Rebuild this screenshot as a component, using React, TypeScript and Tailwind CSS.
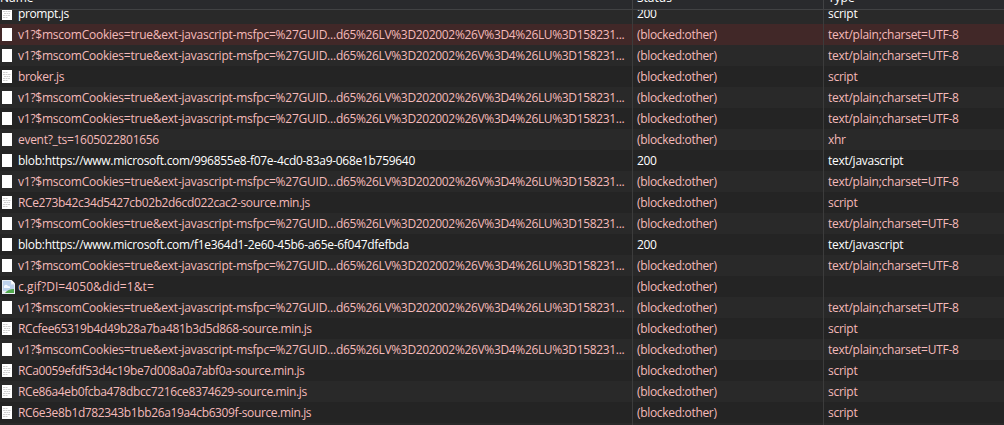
import clsx from 'clsx'

type Icon = 'blank' | 'script' | 'image'

interface NetworkRequest {
  name: string
  // second half of a name that is shortened in the middle
  nameEnd?: string
  status: string
  type: string
  icon: Icon
  // letter spacing of the name cell
  tracking: string
}

const BLOCKED = '(blocked:other)'

const telemetry: NetworkRequest = {
  name: 'v1?$mscomCookies=true&ext-javascript-msfpc=%27GUID...',
  nameEnd: 'd65%26LV%3D202002%26V%3D4%26LU%3D158231...',
  status: BLOCKED,
  type: 'text/plain;charset=UTF-8',
  icon: 'blank',
  tracking: 'tracking-[-0.235px]',
}

const script = (name: string, status = BLOCKED): NetworkRequest => ({
  name,
  status,
  type: 'script',
  icon: 'script',
  tracking: 'tracking-[-0.37px]',
})

const blob = (name: string): NetworkRequest => ({
  name,
  status: '200',
  type: 'text/javascript',
  icon: 'blank',
  tracking: 'tracking-[-0.29px]',
})

const requests: NetworkRequest[] = [
  script('prompt.js', '200'),
  telemetry,
  telemetry,
  script('broker.js'),
  telemetry,
  telemetry,
  { name: 'event?_ts=1605022801656', status: BLOCKED, type: 'xhr', icon: 'blank', tracking: 'tracking-[-0.29px]' },
  blob('blob:https://www.microsoft.com/996855e8-f07e-4cd0-83a9-068e1b759640'),
  telemetry,
  script('RCe273b42c34d5427cb02b2d6cd022cac2-source.min.js'),
  telemetry,
  blob('blob:https://www.microsoft.com/f1e364d1-2e60-45b6-a65e-6f047dfefbda'),
  telemetry,
  { name: 'c.gif?DI=4050&did=1&t=', status: BLOCKED, type: '', icon: 'image', tracking: 'tracking-[0.08px]' },
  telemetry,
  script('RCcfee65319b4d49b28a7ba481b3d5d868-source.min.js'),
  telemetry,
  script('RCa0059efdf53d4c19be7d008a0a7abf0a-source.min.js'),
  script('RCe86a4eb0fcba478dbcc7216ce8374629-source.min.js'),
  script('RC6e3e8b1d782343b1bb26a19a4cb6309f-source.min.js'),
]

const HOVERED = 1

function FileIcon({ icon }: { icon: Icon }) {
  if (icon === 'image') {
    return (
      <svg className="ml-[2px] h-[14px] w-[13px] shrink-0" viewBox="0 0 13 14">
        <path d="M0 0h9.5L13 3.5V14H0z" fill="#e9eef3" />
        <path d="M1 1h8v3.5h3V11H1z" fill="#bed2ec" />
        <path d="M2 6q2-2.5 4 0l2 .5V8H2z" fill="#f5f9ff" />
        <path d="M3 13q3-4 9-4v4z" fill="#51a94d" />
        <path d="M9.5 0v3.5H13z" fill="#fff" />
      </svg>
    )
  }
  return (
    <svg className="mr-[3px] ml-[2px] h-[13px] w-[10px] shrink-0" viewBox="0 0 10 13">
      <path d="M0 0h10v13H0z" fill="#fff" />
      {icon === 'script' && (
        <path d="M1 2.5h5M1 4.5h8M2 6.5h6M1 8.5h7M1 10.5h5" stroke="#cfcfcf" strokeDasharray="2 .5" />
      )}
    </svg>
  )
}

export default function App() {
  return (
    <div className="flex h-[425px] w-[1004px] flex-col overflow-hidden bg-[#292929] font-['Open_Sans','Noto_Sans',sans-serif] text-[12px] text-[#f5baba]">
      <div className="grid h-[10px] shrink-0 grid-cols-[632px_191px_181px] overflow-hidden border-b border-[#414244] bg-[#292a2d] leading-[16px] font-medium text-white">
        <div className="h-full overflow-hidden">
          <div className="-mt-[10px]">Name</div>
        </div>
        <div className="h-full overflow-hidden border-l border-[#414244] pl-1">
          <div className="-mt-[10px]">Status</div>
        </div>
        <div className="h-full overflow-hidden border-l border-[#414244] pl-1">
          <div className="-mt-[10px]">Type</div>
        </div>
      </div>

      <div className="flex min-h-0 flex-1 flex-col overflow-hidden">
        <div className="-mt-[7px]">
          {requests.map((request, index) => (
            <div
              key={index}
              className={clsx('grid h-[21px] grid-cols-[632px_191px_181px] leading-[21px] whitespace-nowrap', {
                'bg-[#412828]': index === HOVERED,
                'bg-[#242424]': index !== HOVERED && index % 2 === 1,
                'bg-[#292929]': index % 2 === 0,
                'text-white': request.status === '200',
              })}
            >
              <div className="flex items-center overflow-hidden">
                <FileIcon icon={request.icon} />
                <span className={clsx('ml-[3px]', request.tracking)}>
                  {request.name}
                  {request.nameEnd && <span className="tracking-[-0.34px]">{request.nameEnd}</span>}
                </span>
              </div>
              <div className="overflow-hidden border-l border-[#3c3c3c] pl-1 tracking-[-0.32px]">{request.status}</div>
              <div className="overflow-hidden border-l border-[#3c3c3c] pl-1 tracking-[-0.27px]">{request.type}</div>
            </div>
          ))}
          <div className="grid h-[21px] grid-cols-[632px_191px_181px]">
            <div />
            <div className="border-l border-[#3c3c3c]" />
            <div className="border-l border-[#3c3c3c]" />
          </div>
        </div>
      </div>
    </div>
  )
}
